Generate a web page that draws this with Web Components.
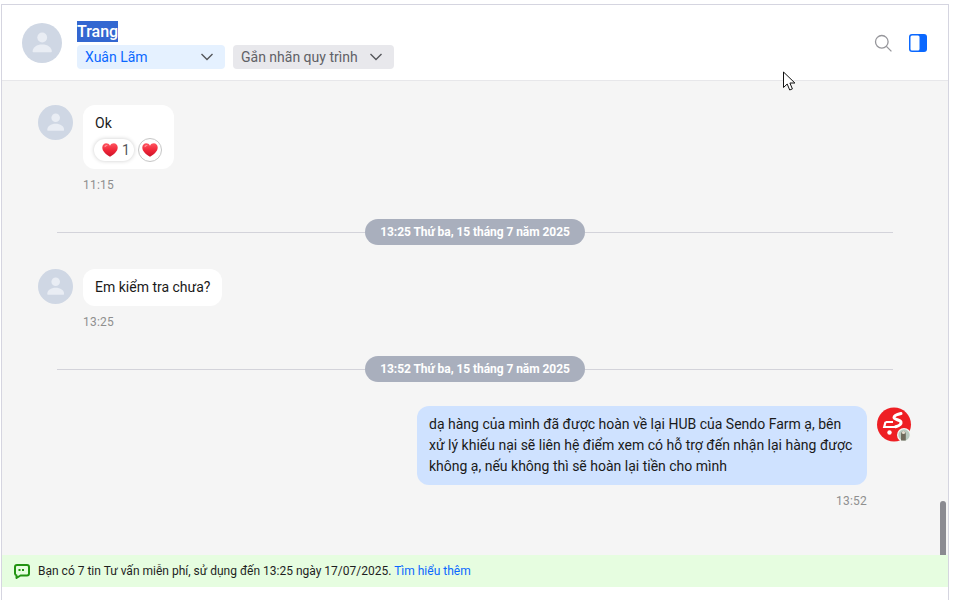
<!DOCTYPE html>
<html lang="vi">
<head>
<meta charset="utf-8">
<title>Trang</title>
<style>
    html, body { margin: 0; height: 100%; background: #fff; overflow: hidden; }
    body { font-family: Roboto, "Liberation Sans", sans-serif; color: #1a1a1a; }
</style>
</head>
<body>
<chat-app>
    <chat-header slot="header" name="Trang"></chat-header>

    <chat-message time="11:15" reactions>Ok</chat-message>
    <chat-divider>13:25 Thứ ba, 15 tháng 7 năm 2025</chat-divider>
    <chat-message time="13:25">Em kiểm tra chưa?</chat-message>
    <chat-divider>13:52 Thứ ba, 15 tháng 7 năm 2025</chat-divider>
    <chat-message time="13:52" mine>dạ hàng của mình đã được hoàn về lại HUB của Sendo Farm ạ, bên xử lý khiếu nại sẽ liên hệ điểm xem có hỗ trợ đến nhận lại hàng được không ạ, nếu không thì sẽ hoàn lại tiền cho mình</chat-message>

    <chat-notice slot="notice">Bạn có 7 tin Tư vấn miễn phí, sử dụng đến 13:25 ngày 17/07/2025.</chat-notice>
</chat-app>

<script>
//avatar gris, la taille vient de l'attribut
class PersonAvatar extends HTMLElement {
    constructor() {
        super();
        this._root = this.attachShadow({ mode: 'open' });
    }
    connectedCallback() {
        const size = this.getAttribute('size') || 35;
        this._root.innerHTML = `
        <style>
            :host { display: block; flex: none; width: ${size}px; height: ${size}px; }
            svg { display: block; width: 100%; height: 100%; }
        </style>
        <svg viewBox="0 0 40 40">
            <circle cx="20" cy="20" r="20" fill="#cfd7e4"/>
            <circle cx="20.2" cy="14.5" r="4.9" fill="#e9edf4"/>
            <path d="M10.6 28.6c0-4.6 4.2-7.2 9.6-7.2s9.6 2.6 9.6 7.2c0 .4-.3.7-.7.7H11.3c-.4 0-.7-.3-.7-.7z" fill="#e9edf4"/>
        </svg>`;
    }
}
customElements.define('person-avatar', PersonAvatar);

//logo rouge de la boutique + petite photo
class ShopAvatar extends HTMLElement {
    constructor() {
        super();
        this._root = this.attachShadow({ mode: 'open' });
        this._root.innerHTML = `
        <style>
            :host { display: block; flex: none; width: 35px; height: 35px; }
            svg { display: block; }
        </style>
        <svg width="35" height="35" viewBox="0 0 35 35">
            <circle cx="17" cy="17.5" r="17" fill="#ee1f24"/>
            <path d="M24 6.500c-3.500.8-7 2.200-7 4 0 2.100 6.500 2.400 7 4.600.4 1.900-2 3.700-5.500 4.600" fill="none" stroke="#fff" stroke-width="3" stroke-linecap="round"/>
            <path d="M8.500 15h7.500M8.500 15l-1.300 5h13" fill="none" stroke="#fff" stroke-width="2.200"/>
            <circle cx="12.500" cy="25.500" r="2.200" fill="#fff"/>
            <circle cx="27" cy="28" r="7" fill="#f4f6f3"/>
            <circle cx="27" cy="28" r="5.700" fill="#b9c9bf"/>
            <path d="M24 33.500v-6c0-2 1-3.200 2.500-3.200s2.300 1.200 2.300 3.200v6z" fill="#6f6a5c"/>
            <circle cx="26.500" cy="25.500" r="1.600" fill="#e5ddd0"/>
        </svg>`;
    }
}
customElements.define('shop-avatar', ShopAvatar);

//liste deroulante du haut
class HeaderChip extends HTMLElement {
    constructor() {
        super();
        this._root = this.attachShadow({ mode: 'open' });
        this._root.innerHTML = `
        <style>
            :host {
                display: flex;
                align-items: center;
                justify-content: space-between;
                box-sizing: border-box;
                height: 24px;
                border-radius: 4px;
                padding: 0 11px 0 8px;
                font-size: 14px;
                background: #e8e8ec;
                color: #606166;
            }
            :host([blue]) { background: #e5f1ff; color: #0a68ff; }
            svg { display: block; flex: none; }
        </style>
        <slot></slot>
        <svg width="14" height="8" viewBox="0 0 14 8"><path d="M1.500 1l5.500 5.500L12.500 1" fill="none" stroke="#55565b" stroke-width="1.400"/></svg>`;
    }
}
customElements.define('header-chip', HeaderChip);

class ChatHeader extends HTMLElement {
    constructor() {
        super();
        this._root = this.attachShadow({ mode: 'open' });
    }
    connectedCallback() {
        this._root.innerHTML = `
        <style>
            :host {
                display: flex;
                align-items: center;
                box-sizing: border-box;
                height: 76px;
                padding: 0 21px 0 20px;
                background: #fff;
                border-bottom: 1px solid #e7e7ea;
            }
            .infos { margin-left: 15px; flex: 1; padding-top: 4px; }
            .nom {
                display: block;
                width: max-content;
                height: 21px;
                line-height: 21px;
                font-size: 16px;
                font-weight: 500;
                color: #fff;
                background: #3367d1;
            }
            .chips { display: flex; gap: 8px; margin-top: 3px; }
            .chips header-chip:first-child { width: 148px; }
            .chips header-chip:last-child { width: 161px; }
            .actions { display: flex; align-items: center; gap: 17px; }
            svg { display: block; }
        </style>
        <person-avatar size="40"></person-avatar>
        <div class="infos">
            <span class="nom">${this.getAttribute('name')}</span>
            <div class="chips">
                <header-chip blue>Xuân Lãm</header-chip>
                <header-chip>Gắn nhãn quy trình</header-chip>
            </div>
        </div>
        <div class="actions">
            <svg width="18" height="18" viewBox="0 0 18 18"><circle cx="7.800" cy="7.800" r="6.300" fill="none" stroke="#96969b" stroke-width="1.300"/><path d="M12.400 12.400l5 5" stroke="#96969b" stroke-width="1.300"/></svg>
            <svg width="18" height="18" viewBox="0 0 18 18"><rect width="18" height="18" rx="3" fill="#0a68ff"/><rect x="1.500" y="1.500" width="9" height="15" rx="1.500" fill="#fff"/></svg>
        </div>`;
    }
}
customElements.define('chat-header', ChatHeader);

//coeur rouge des reactions, avec degrade comme l'emoji
let coeurId = 0;
function coeur() {
    const id = 'degrade' + (coeurId++);
    return `<svg viewBox="0 0 18 16">
    <defs><linearGradient id="${id}" x1="0" y1="0" x2="0" y2="1"><stop offset="0" stop-color="#ff5560"/><stop offset=".55" stop-color="#ee2436"/><stop offset="1" stop-color="#c9152b"/></linearGradient></defs>
    <path d="M9 15.800C4 12.400 .2 9.300 .2 5 .2 2.300 2.300 .4 4.700 .4 6.500 .4 8 1.400 9 3 10 1.400 11.500 .4 13.300 .4c2.400 0 4.500 1.900 4.500 4.600C17.800 9.300 14 12.400 9 15.800z" fill="url(#${id})"/>
    <path d="M2.700 3.500c.9-1 2.600-1.200 3.700-.3-1.300.1-2.600.8-3.200 2z" fill="#ffa3a8"/>
</svg>`;
}

class ChatReactions extends HTMLElement {
    constructor() {
        super();
        this._root = this.attachShadow({ mode: 'open' });
        this._root.innerHTML = `
        <style>
            :host { display: flex; gap: 4px; align-items: center; margin: 4px 0 0 -1px; }
            .compte {
                display: flex;
                align-items: center;
                box-sizing: border-box;
                width: 40px;
                height: 22px;
                padding-left: 8px;
                gap: 4px;
                border-radius: 11px;
                background: #fff;
                box-shadow: 0 0 4px rgba(0, 0, 0, .2);
                font-size: 14px;
                color: #55565b;
            }
            .bouton {
                display: flex;
                align-items: center;
                justify-content: center;
                box-sizing: border-box;
                width: 24px;
                height: 24px;
                border-radius: 50%;
                border: 1px solid #c6c6c6;
            }
            svg { display: block; width: 16px; height: 14px; }
        </style>
        <div class="compte">${coeur()}<span>1</span></div>
        <div class="bouton">${coeur()}</div>`;
    }
}
customElements.define('chat-reactions', ChatReactions);

class ChatMessage extends HTMLElement {
    constructor() {
        super();
        this._root = this.attachShadow({ mode: 'open' });
    }
    connectedCallback() {
        const mine = this.hasAttribute('mine');
        this._root.innerHTML = `
        <style>
            :host { display: flex; gap: 10px; padding: 0 0 0 36px; }
            :host([mine]) { flex-direction: row-reverse; padding: 0 36px 0 0; }
            .col { display: flex; flex-direction: column; align-items: flex-start; }
            :host([mine]) .col { align-items: flex-end; width: 450px; }
            .bulle {
                box-sizing: border-box;
                background: #fff;
                border-radius: 12px;
                padding: 8px 12px;
                font-size: 14px;
                line-height: 21px;
                color: #1a1a1a;
            }
            :host([reactions]) .bulle { width: 91px; height: 64px; }
            :host([mine]) .bulle { background: #cfe2ff; }
            .heure { margin-top: 8px; font-size: 12px; letter-spacing: .2px; line-height: 16px; color: #8f8f8f; }
            :host([mine]) shop-avatar { margin-top: 1px; }
        </style>
        ${mine ? '<shop-avatar></shop-avatar>' : '<person-avatar></person-avatar>'}
        <div class="col">
            <div class="bulle"><slot></slot>${this.hasAttribute('reactions') ? '<chat-reactions></chat-reactions>' : ''}</div>
            <div class="heure">${this.getAttribute('time')}</div>
        </div>`;
    }
}
customElements.define('chat-message', ChatMessage);

//separateur date avec la ligne derriere
class ChatDivider extends HTMLElement {
    constructor() {
        super();
        this._root = this.attachShadow({ mode: 'open' });
        this._root.innerHTML = `
        <style>
            :host {
                display: flex;
                align-items: center;
                margin: 0 55px 0 55px;
            }
            .ligne { flex: 1; height: 1px; background: #d3d3da; }
            .date {
                box-sizing: border-box;
                width: 220px;
                height: 26px;
                line-height: 26px;
                text-align: center;
                border-radius: 13px;
                background: #a9afbd;
                color: #fff;
                font-size: 12px;
                font-weight: 700;
                letter-spacing: -.06px;
            }
        </style>
        <div class="ligne"></div>
        <div class="date"><slot></slot></div>
        <div class="ligne"></div>`;
    }
}
customElements.define('chat-divider', ChatDivider);

class ChatNotice extends HTMLElement {
    constructor() {
        super();
        this._root = this.attachShadow({ mode: 'open' });
        this._root.innerHTML = `
        <style>
            :host {
                display: flex;
                align-items: center;
                gap: 8px;
                box-sizing: border-box;
                height: 32px;
                padding-left: 12px;
                background: #e6fde0;
                font-size: 12px;
                color: #1f1f1f;
            }
            a { color: #0a68ff; text-decoration: none; }
            svg { display: block; flex: none; }
        </style>
        <svg width="16" height="15" viewBox="0 0 16 15">
            <path d="M3 1h10a2 2 0 0 1 2 2v6.500a2 2 0 0 1-2 2H6.500L2.500 14v-2.600A2 2 0 0 1 1 9.500V3a2 2 0 0 1 2-2z" fill="none" stroke="#229312" stroke-width="2" stroke-linejoin="round"/>
            <rect x="4.500" y="5" width="2" height="2" fill="#229312"/>
            <rect x="8" y="5" width="2" height="2" fill="#229312"/>
        </svg>
        <span><slot></slot> <a href="#">Tìm hiểu thêm</a></span>`;
    }
}
customElements.define('chat-notice', ChatNotice);

//cadre de la page
class ChatApp extends HTMLElement {
    constructor() {
        super();
        this._root = this.attachShadow({ mode: 'open' });
        this._root.innerHTML = `
        <style>
            :host {
                display: flex;
                flex-direction: column;
                box-sizing: border-box;
                width: 948px;
                height: 596px;
                margin: 4px 0 0 1px;
                border-top: 1px solid #d5d5e0;
                border-left: 1px solid #d5d5e0;
                border-right: 1px solid #d5d5e0;
                position: relative;
            }
            .fil {
                display: flex;
                flex-direction: column;
                height: 474px;
                box-sizing: border-box;
                padding-top: 24px;
                background: #f5f5f5;
                position: relative;
                overflow: hidden;
            }
            .pied { flex: 1; background: #fff; }
            .barre {
                position: absolute;
                right: 2px;
                bottom: 0;
                width: 6px;
                height: 54px;
                border-radius: 3px 3px 0 0;
                background: #8a8a91;
            }
            .curseur { position: absolute; left: 780px; top: 66px; display: block; }
            ::slotted(chat-divider) { margin-top: 26px; margin-bottom: 24px; }
        </style>
        <slot name="header"></slot>
        <div class="fil">
            <slot></slot>
            <div class="barre"></div>
        </div>
        <slot name="notice"></slot>
        <div class="pied"></div>
        <svg class="curseur" width="14" height="21" viewBox="0 0 14 21">
            <path d="M1.500 1v15.500l3.700-3.500 2.500 6 2.700-1.100-2.500-5.900h5z" fill="#fff" stroke="#111" stroke-width="1"/>
        </svg>`;
    }
}
customElements.define('chat-app', ChatApp);
</script>
</body>
</html>
